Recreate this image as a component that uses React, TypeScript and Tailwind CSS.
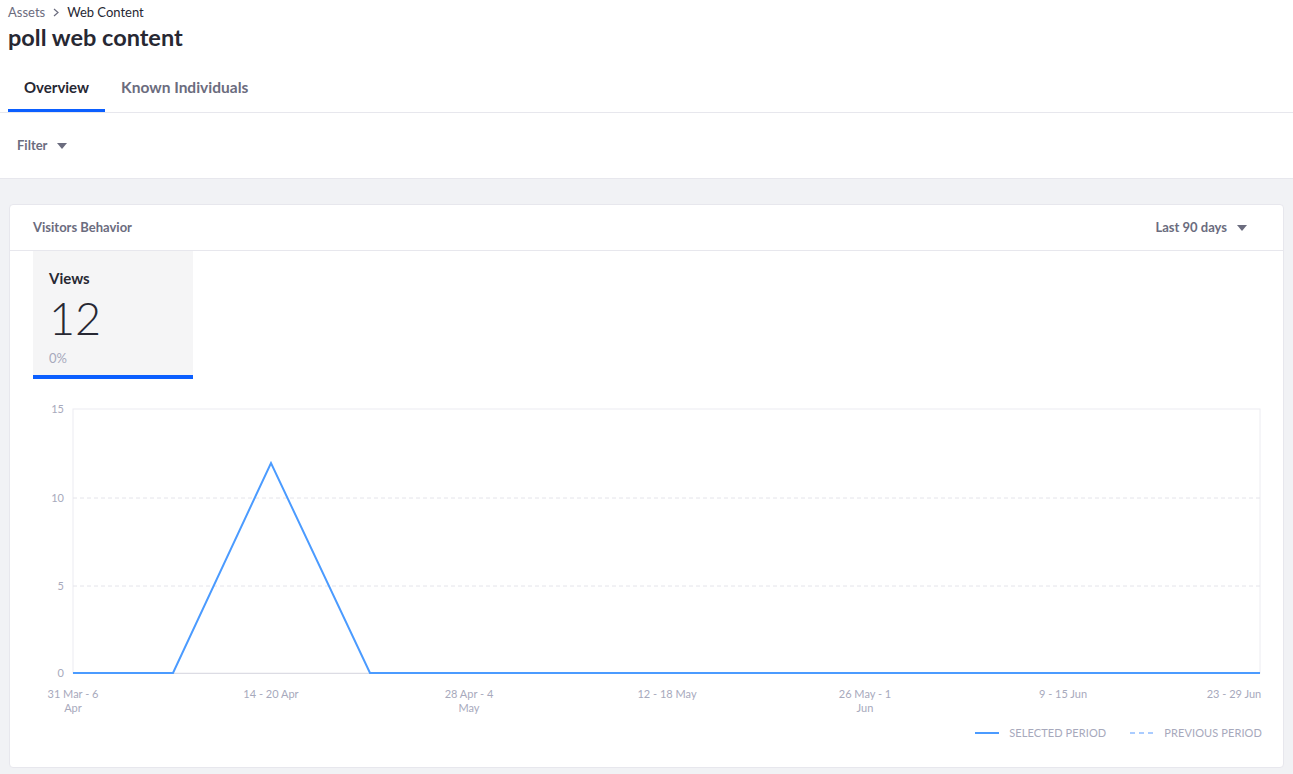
import React from "react";

const Caret = () => (
  <svg width="10" height="6" viewBox="0 0 10 6" className="ml-[10px]">
    <path d="M0 0 L10 0 L5 6 Z" fill="#6b6c7e" />
  </svg>
);

const OX = 10;
const OY = 390;
const px = (x: number) => x - OX;
const py = (y: number) => y - OY;

function Chart() {
  const left = px(73);
  const right = px(1260);
  const top = py(409);
  const bottom = py(673);
  const yTicks = [
    { v: "15", y: py(409) },
    { v: "10", y: py(498) },
    { v: "5", y: py(586) },
    { v: "0", y: py(673) },
  ];
  const xLabels: { x: number; l: string[] }[] = [
    { x: 73, l: ["31 Mar - 6", "Apr"] },
    { x: 271, l: ["14 - 20 Apr"] },
    { x: 469, l: ["28 Apr - 4", "May"] },
    { x: 667, l: ["12 - 18 May"] },
    { x: 865, l: ["26 May - 1", "Jun"] },
    { x: 1063, l: ["9 - 15 Jun"] },
    { x: 1234, l: ["23 - 29 Jun"] },
  ];
  const pts = [
    [73, 673],
    [173, 673],
    [271, 463],
    [370, 673],
    [1260, 673],
  ]
    .map(([x, y]) => `${px(x)},${py(y)}`)
    .join(" ");
  return (
    <svg width={1276} height={330} className="block" style={{ fontFamily: "Lato, 'Noto Sans', sans-serif" }}>
      <rect x={left} y={top} width={right - left} height={bottom - top} fill="none" stroke="#ececf1" strokeWidth={1} />
      <line x1={left} x2={right} y1={py(498)} y2={py(498)} stroke="#e4e4ea" strokeDasharray="4 3" />
      <line x1={left} x2={right} y1={py(586)} y2={py(586)} stroke="#e4e4ea" strokeDasharray="4 3" />
      <line x1={left} x2={right} y1={bottom + 0.5} y2={bottom + 0.5} stroke="#dcdce4" />
      {yTicks.map((t) => (
        <text key={t.v} x={left - 9} y={t.y + 4} textAnchor="end" fontSize={11} fill="#a7a9bc">
          {t.v}
        </text>
      ))}
      {xLabels.map((t) =>
        t.l.map((s, i) => (
          <text key={s} x={px(t.x)} y={py(698) + i * 14} textAnchor="middle" fontSize={11} fill="#a7a9bc">
            {s}
          </text>
        ))
      )}
      <polyline points={pts} fill="none" stroke="#4b9bff" strokeWidth={2} strokeLinejoin="miter" />
    </svg>
  );
}

export default function App() {
  return (
    <div className="w-[1293px] h-[774px] bg-[#f1f2f5] overflow-hidden text-[#272833]" style={{ fontFamily: "Lato, 'Noto Sans', sans-serif" }}>
      <div className="bg-white">
        <div className="px-[8px] pt-[4px]">
          <div className="flex items-center text-[13px] leading-[16px] h-[16px]">
            <span className="text-[#6b6c7e]">Assets</span>
            <svg width="6" height="9" viewBox="0 0 6 9" className="mx-[8px]">
              <path d="M1 1 L5 4.5 L1 8" stroke="#6b6c7e" strokeWidth="1.2" fill="none" />
            </svg>
            <span className="text-[#272833]">Web Content</span>
          </div>
          <div className="text-[23.5px] font-bold leading-[28px] mt-[3px]">poll web content</div>
        </div>
        <div className="flex px-[8px] mt-[18px] border-b border-[#e7e7ed]">
          <div className="px-[16px] pt-[8px] pb-[12px] border-b-[3px] border-[#0b5fff] text-[15px] font-bold leading-[20px] text-[#272833]">Overview</div>
          <div className="px-[16px] pt-[8px] pb-[12px] border-b-[3px] border-transparent text-[15.5px] font-bold leading-[20px] text-[#6b6c7e]">Known Individuals</div>
        </div>
        <div className="h-[66px] flex items-center px-[17px] border-b border-[#e7e7ed]">
          <span className="text-[13px] font-bold text-[#6b6c7e]">Filter</span>
          <Caret />
        </div>
      </div>
      <div className="px-[9px] pt-[25px]">
        <div className="bg-white border border-[#e7e7ed] rounded-[4px] h-[564px]">
          <div className="h-[46px] flex items-center justify-between pl-[23px] pr-[36px] border-b border-[#e7e7ed]">
            <span className="text-[13px] font-bold text-[#6b6c7e]">Visitors Behavior</span>
            <div className="flex items-center">
              <span className="text-[13px] font-bold text-[#6b6c7e]">Last 90 days</span>
              <Caret />
            </div>
          </div>
          <div className="pl-[23px]">
            <div className="w-[160px] h-[128px] bg-[#f5f5f6] border-b-[4px] border-[#0b5fff] px-[16px] pt-[18px]">
              <div className="text-[15px] font-bold leading-[18px] text-[#272833]">Views</div>
              <div className="text-[45px] font-light leading-[48px] mt-[7px] text-[#272833]">12</div>
              <div className="text-[13px] leading-[16px] mt-[8px] text-[#a7a9bc]">0%</div>
            </div>
          </div>
          <div className="mt-[11px]">
            <Chart />
          </div>
          <div className="flex items-center justify-end pr-[21px] mt-[5px] text-[11px] text-[#a7a9bc] tracking-[0.1px]">
            <svg width="24" height="4"><line x1="0" x2="24" y1="2" y2="2" stroke="#4b9bff" strokeWidth="2" /></svg>
            <span className="ml-[10px]">SELECTED PERIOD</span>
            <svg width="24" height="4" className="ml-[24px]"><line x1="0" x2="24" y1="2" y2="2" stroke="#8fbcff" strokeWidth="1.5" strokeDasharray="5 4" /></svg>
            <span className="ml-[10px]">PREVIOUS PERIOD</span>
          </div>
        </div>
      </div>
    </div>
  );
}
